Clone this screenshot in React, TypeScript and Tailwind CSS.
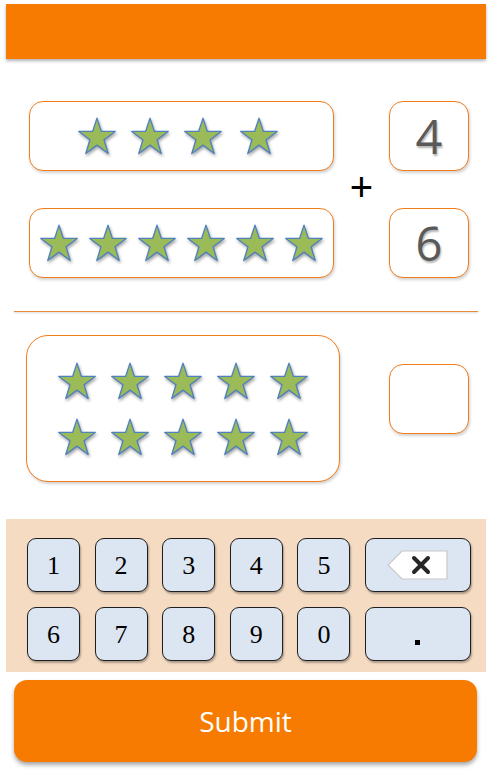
import React from "react";

function Star() {
  return (
    <svg width="38" height="38" viewBox="0 0 100 100" className="drop-shadow-[1px_2px_1.5px_rgba(0,0,0,0.35)]">
      <polygon
        points="50,3 61.5,38 98,38 68.5,60 79.5,96 50,74 20.5,96 31.5,60 2,38 38.5,38"
        fill="#9BBB59"
        stroke="#4F81BD"
        strokeWidth="3.5"
        strokeLinejoin="round"
      />
    </svg>
  );
}

function Key({ label }: { label: string }) {
  return (
    <div className="w-[53px] h-[54px] rounded-[9px] border border-[#1f1f1f] bg-[#DCE6F2] shadow-[1px_2px_2px_rgba(0,0,0,0.3)] flex items-center justify-center font-['Liberation_Serif',serif] text-[26px] text-black">
      {label}
    </div>
  );
}

export default function App() {
  const boxCls =
    "border border-[#F47C1A] bg-white shadow-[1px_2px_3px_rgba(0,0,0,0.18)]";
  return (
    <div className="w-[492px] h-[770px] bg-white font-['Open_Sans',sans-serif] overflow-hidden">
      <div className="mx-[6px] mt-[4px] h-[55px] bg-[#F77B00] shadow-[0_2px_3px_rgba(0,0,0,0.3)]" />

      <div className="flex mt-[42px] pl-[29px]">
        <div className="flex flex-col gap-[37px]">
          <div className={`w-[305px] h-[70px] rounded-[14px] ${boxCls} flex items-center pl-[48px] gap-[15px]`}>
            <Star />
            <Star />
            <Star />
            <div className="ml-[3px]"><Star /></div>
          </div>
          <div className={`w-[305px] h-[70px] rounded-[14px] ${boxCls} flex items-center pl-[10px] gap-[11px]`}>
            <Star />
            <Star />
            <Star />
            <Star />
            <Star />
            <Star />
          </div>
        </div>
        <div className="w-[55px] flex items-center justify-center">
          <span className="text-[40px] leading-none text-black font-['Liberation_Sans',sans-serif] -mt-[6px]">+</span>
        </div>
        <div className="flex flex-col gap-[37px]">
          <div className={`w-[80px] h-[70px] rounded-[14px] ${boxCls} flex items-center justify-center text-[47px] text-[#595959] [text-shadow:1px_2px_2px_rgba(0,0,0,0.3)]`}>
            4
          </div>
          <div className={`w-[80px] h-[70px] rounded-[14px] ${boxCls} flex items-center justify-center text-[47px] text-[#595959] [text-shadow:1px_2px_2px_rgba(0,0,0,0.3)]`}>
            6
          </div>
        </div>
      </div>

      <div className="mx-[14px] mt-[33px] h-px bg-[#E88A3A] shadow-[0_1px_2px_rgba(0,0,0,0.2)]" />

      <div className="flex mt-[23px] pl-[26px]">
        <div className={`w-[314px] h-[147px] rounded-[22px] ${boxCls} flex flex-col items-center justify-center gap-[18px]`}>
          <div className="flex gap-[15px]">
            <Star />
            <Star />
            <Star />
            <Star />
            <Star />
          </div>
          <div className="flex gap-[15px]">
            <Star />
            <Star />
            <Star />
            <Star />
            <Star />
          </div>
        </div>
        <div className={`ml-[49px] mt-[29px] w-[80px] h-[70px] rounded-[14px] ${boxCls}`} />
      </div>

      <div className="mx-[6px] mt-[37px] h-[153px] bg-[#F5DBC2] pl-[21px] pt-[19px] flex flex-col gap-[15px]">
        <div className="flex gap-[14.6px]">
          {["1", "2", "3", "4", "5"].map((k) => (
            <Key key={k} label={k} />
          ))}
          <div className="w-[106px] h-[54px] rounded-[9px] border border-[#1f1f1f] bg-[#DCE6F2] shadow-[1px_2px_2px_rgba(0,0,0,0.3)] flex items-center justify-center">
            <svg width="62" height="30" viewBox="0 0 62 30">
              <polygon points="1,15 15,1 60,1 60,29 15,29" fill="#fff" stroke="#C8C8C8" strokeWidth="1.2" />
              <path d="M27 8 L41 22 M41 8 L27 22" stroke="#262626" strokeWidth="4" strokeLinecap="round" />
            </svg>
          </div>
        </div>
        <div className="flex gap-[14.6px]">
          {["6", "7", "8", "9", "0"].map((k) => (
            <Key key={k} label={k} />
          ))}
          <div className="w-[106px] h-[54px] rounded-[9px] border border-[#1f1f1f] bg-[#DCE6F2] shadow-[1px_2px_2px_rgba(0,0,0,0.3)] flex items-center justify-center">
            <div className="w-[5px] h-[5px] bg-black mt-[16px]" />
          </div>
        </div>
      </div>

      <div className="mx-[14px] w-[463px] mt-[8px] h-[82px] rounded-[13px] bg-[#F77B00] shadow-[0_3px_4px_rgba(0,0,0,0.35)] flex items-center justify-center text-white text-[28px]">
        Submit
      </div>
    </div>
  );
}
